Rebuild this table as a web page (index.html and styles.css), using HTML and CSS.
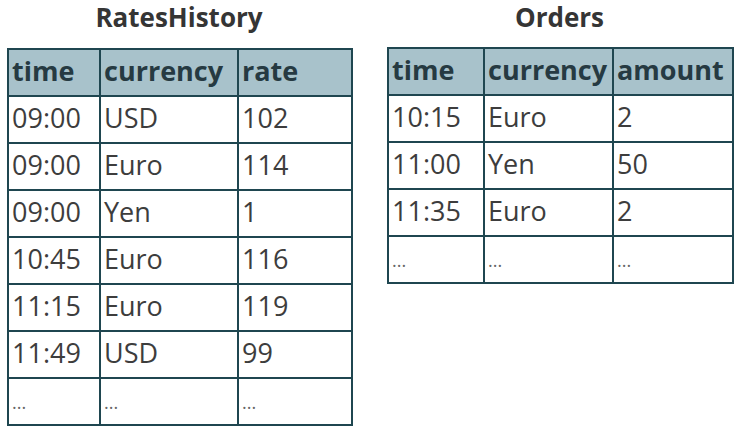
FILE: index.html
```html
<!DOCTYPE html>
<html>
<head>
<meta charset="utf-8">
<link rel="stylesheet" href="styles.css">
</head>
<body>
<div class="page">
  <section class="block block-left">
    <h2 class="title">RatesHistory</h2>
    <table class="tbl">
      <colgroup><col class="c1"><col class="c2"><col class="c3"></colgroup>
      <thead><tr><th>time</th><th>currency</th><th>rate</th></tr></thead>
      <tbody>
        <tr><td>09:00</td><td>USD</td><td>102</td></tr>
        <tr><td>09:00</td><td>Euro</td><td>114</td></tr>
        <tr><td>09:00</td><td>Yen</td><td>1</td></tr>
        <tr><td>10:45</td><td>Euro</td><td>116</td></tr>
        <tr><td>11:15</td><td>Euro</td><td>119</td></tr>
        <tr><td>11:49</td><td>USD</td><td>99</td></tr>
        <tr class="dots"><td>...</td><td>...</td><td>...</td></tr>
      </tbody>
    </table>
  </section>
  <section class="block block-right">
    <h2 class="title">Orders</h2>
    <table class="tbl">
      <colgroup><col class="d1"><col class="d2"><col class="d3"></colgroup>
      <thead><tr><th>time</th><th>currency</th><th>amount</th></tr></thead>
      <tbody>
        <tr><td>10:15</td><td>Euro</td><td>2</td></tr>
        <tr><td>11:00</td><td>Yen</td><td>50</td></tr>
        <tr><td>11:35</td><td>Euro</td><td>2</td></tr>
        <tr class="dots"><td>...</td><td>...</td><td>...</td></tr>
      </tbody>
    </table>
  </section>
</div>
</body>
</html>
```
FILE: styles.css
```css
html, body {
  margin: 0;
  padding: 0;
  background: #ffffff;
}
body {
  font-family: "Open Sans", "Noto Sans", sans-serif;
  color: #3b3b3b;
}
.page {
  display: flex;
  align-items: flex-start;
  padding-left: 7px;
  gap: 36px;
}
.block {
  display: flex;
  flex-direction: column;
  align-items: stretch;
}
.block-left { width: 344px; }
.block-right { width: 345px; }
.title {
  margin: 0;
  height: 48px;
  line-height: 34px;
  font-size: 26px;
  font-weight: 700;
  text-align: center;
  color: #353535;
}
.block-right .title { height: 47px; }
.tbl {
  border-collapse: collapse;
  table-layout: fixed;
  width: 100%;
}
.c1 { width: 92px; }
.c2 { width: 138px; }
.c3 { width: 114px; }
.d1 { width: 96px; }
.d2 { width: 129px; }
.d3 { width: 120px; }
.tbl th, .tbl td {
  border: 2px solid #1f4650;
  padding: 0 0 3px 3px;
  height: 47px;
  text-align: left;
  font-size: 27px;
  white-space: nowrap;
  overflow: hidden;
  line-height: 30px;
  box-sizing: border-box;
}
.tbl th {
  background: #a8c2cb;
  color: #263a42;
  font-weight: 700;
}
.tbl td {
  font-weight: 400;
  color: #3d3d3d;
}
.tbl .dots td {
  font-size: 18px;
  color: #666666;
  padding-bottom: 0;
}
```
